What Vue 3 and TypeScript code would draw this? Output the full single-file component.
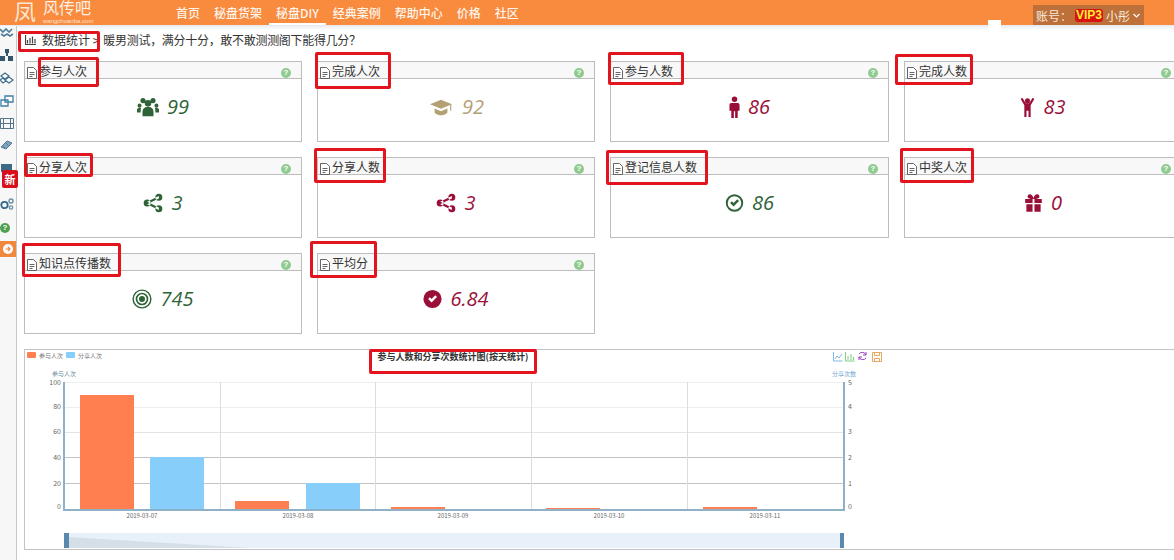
<script setup lang="ts">
const circle = (cx: number, cy: number, r: number) =>
  `M${cx - r} ${cy}a${r} ${r} 0 1 0 ${2 * r} 0a${r} ${r} 0 1 0 ${-2 * r} 0z`

const checkMark = 'M6.5 12L8.7 9.8L10.8 12L15.5 7.2L17.7 9.4L10.8 16.4z'

const icons: Record<string, { d: string; width: number; box?: string; odd?: boolean }> = {
  users: {
    width: 22,
    d:
      circle(6.5, 5, 2.8) + circle(17.5, 5, 2.8) + circle(12, 8, 3.6) + circle(2.8, 10.5, 2.2) + circle(21.2, 10.5, 2.2) +
      'M6 22v-5a5 5 0 0 1 5-5h2a5 5 0 0 1 5 5v5zM0 18v-3a2 2 0 0 1 2-2h2.5a7 7 0 0 0-.5 3v2zM24 18v-3a2 2 0 0 0-2-2h-2.5a7 7 0 0 1 .5 3v2z',
  },
  cap: {
    width: 26,
    d: 'M12 4L24 9L12 14L0 9zM5 13.500v4c0 2 4 3.500 7 3.500s7-1.500 7-3.500v-4l-7 3zM22 10v6h1.200v-6.600z',
  },
  male: {
    width: 11,
    box: '6 0 12 24',
    d: circle(12, 3.5, 3) + 'M8.500 7.500h7a2 2 0 0 1 2 2v6.500h-2v8h-2.800v-7.500h-1.400v7.500h-2.800v-8h-2v-6.500a2 2 0 0 1 2-2z',
  },
  child: {
    width: 15,
    box: '3 0 18 24',
    d: circle(12, 4.5, 3) + 'M3.800 2.500L5.800 1L10 7.500h4L18.200 1L20.200 2.500L15.800 10v5.500v8.500h-2.600v-7.500h-2.400v7.500h-2.600v-14z',
  },
  share: {
    width: 20,
    d:
      circle(5, 12, 4.2) + circle(19, 5, 4.2) + circle(19, 19, 4.2) +
      'M5 10.400L19 3.500v3L5 13.600zM5 10.400L19 17.500v3L5 13.600z',
  },
  checkO: {
    width: 19,
    odd: true,
    d: circle(12, 12, 11) + circle(12, 12, 8.6) + checkMark,
  },
  gift: {
    width: 19,
    d:
      'M1.500 7h9.300v5H1.500zM13.200 7h9.300v5h-9.300zM3 13.500h7.800V23H3zM13.200 13.500H21V23h-7.800z' +
      'M12 7C8 7 4.500 6.500 4.500 3.800a3 3 0 0 1 3-3c2.300 0 4.500 3 4.500 6.200c0-3.200 2.200-6.200 4.500-6.200a3 3 0 0 1 3 3C19.500 6.500 16 7 12 7z',
  },
  bullseye: {
    width: 20,
    odd: true,
    d: circle(12, 12, 11.5) + circle(12, 12, 9.8) + circle(12, 12, 7.6) + circle(12, 12, 5.6) + circle(12, 12, 3.6),
  },
  check: {
    width: 19,
    odd: true,
    d: circle(12, 12, 11.5) + checkMark,
  },
}

const navItems = ['首页', '秘盘货架', '秘盘DIY', '经典案例', '帮助中心', '价格', '社区']

const cards = [
  { title: '参与人次', icon: 'users', value: '99', tone: 'green' },
  { title: '完成人次', icon: 'cap', value: '92', tone: 'tan' },
  { title: '参与人数', icon: 'male', value: '86', tone: 'maroon' },
  { title: '完成人数', icon: 'child', value: '83', tone: 'maroon' },
  { title: '分享人次', icon: 'share', value: '3', tone: 'green' },
  { title: '分享人数', icon: 'share', value: '3', tone: 'maroon' },
  { title: '登记信息人数', icon: 'checkO', value: '86', tone: 'green' },
  { title: '中奖人次', icon: 'gift', value: '0', tone: 'maroon' },
  { title: '知识点传播数', icon: 'bullseye', value: '745', tone: 'green' },
  { title: '平均分', icon: 'check', value: '6.84', tone: 'maroon' },
]

// 红色标注框 [x1, y1, x2, y2]
const marks = [
  [18, 31, 100, 52],
  [38, 57, 99, 87],
  [315, 52, 391, 89],
  [608, 52, 684, 85],
  [895, 54, 973, 85],
  [24, 153, 93, 177],
  [314, 148, 386, 183],
  [606, 150, 708, 185],
  [900, 148, 974, 183],
  [22, 243, 121, 277],
  [310, 241, 377, 278],
  [369, 349, 537, 374],
]

const markStyle = (m: number[]) => ({
  left: `${m[0]}px`,
  top: `${m[1]}px`,
  width: `${m[2] - m[0]}px`,
  height: `${m[3] - m[1]}px`,
})

const plotBottom = 510
const leftTicks = [
  { label: '100', y: 382 },
  { label: '80', y: 406 },
  { label: '60', y: 431 },
  { label: '40', y: 457 },
  { label: '20', y: 483 },
  { label: '0', y: 506 },
]
const rightTicks = ['5', '4', '3', '2', '1', '0']
const gridX = [220, 375, 531, 687]
const bars = [
  { x: 80, top: 395, color: '#ff7f50' },
  { x: 150, top: 457, color: '#87cefa' },
  { x: 235, top: 501, color: '#ff7f50' },
  { x: 306, top: 483, color: '#87cefa' },
  { x: 391, top: 507, color: '#ff7f50' },
  { x: 546, top: 508, color: '#ff7f50' },
  { x: 703, top: 507, color: '#ff7f50' },
]
const dates = [
  { label: '2019-03-07', x: 142 },
  { label: '2019-03-08', x: 298 },
  { label: '2019-03-09', x: 453 },
  { label: '2019-03-10', x: 609 },
  { label: '2019-03-11', x: 765 },
]
</script>

<template>
  <div class="page">
    <header class="topbar">
      <div class="logo">
        <span class="logo-mark">凤</span>
        <div class="logo-text">
          <span class="logo-name">风传吧</span>
          <span class="logo-url">wangchuanba.com</span>
        </div>
      </div>
      <nav class="nav">
        <a v-for="item in navItems" :key="item" :class="['nav-item', { active: item === '秘盘DIY' }]">{{ item }}</a>
      </nav>
      <div class="account">
        <span>账号：</span>
        <span class="vip">VIP3</span>
        <span>小彤</span>
        <svg width="7" height="5" viewBox="0 0 7 5"><path d="M.5 1l3 3 3-3" fill="none" stroke="#fff" stroke-width="1.2" /></svg>
      </div>
    </header>
    <div class="topbar-shade"></div>

    <div class="body">
      <aside class="sidebar">
        <svg class="side-icon" width="14" height="12" viewBox="0 0 14 12"><path d="M0 3l3 3 3-3 3 3 3-3M1 8l3 2 3-2 3 2 3-2" fill="none" stroke="#4f7d99" stroke-width="1.6" /></svg>
        <svg class="side-icon" width="14" height="12" viewBox="0 0 14 12"><path d="M5 0h4v4H5zM0 7h5v5H0zM8 7h5v5H8zM6 4h2v3H6z" fill="#33566e" /></svg>
        <svg class="side-icon" width="14" height="12" viewBox="0 0 14 12"><path d="M1 4l4-3 4 3-4 3zM5 8l4-3 4 3-4 3zM0 8l3-2 3 3-3 2z" fill="#fff" stroke="#3f6f8e" stroke-width="1.2" /></svg>
        <svg class="side-icon" width="14" height="12" viewBox="0 0 14 12"><path d="M5 1h8v6H5zM1 5h7v6H1z" fill="#fff" stroke="#3f7fa8" stroke-width="1.3" /></svg>
        <svg class="side-icon" width="14" height="11" viewBox="0 0 14 11"><path d="M.5.5h13v10H.5zM3.500.5v10M10.500.5v10M.5 5.500h13" fill="none" stroke="#56748a" /></svg>
        <svg class="side-icon" width="13" height="10" viewBox="0 0 13 10"><path d="M1 7l6-6 5 2-6 6zM3 6l2 2M6 3l2 2" fill="#7fa6bd" stroke="#4f7d99" /></svg>
        <div class="side-new">
          <span class="side-new-top"></span>
          <span class="side-new-badge">新</span>
        </div>
        <svg class="side-icon gear" width="14" height="12" viewBox="0 0 14 12"><circle cx="4.500" cy="7" r="3.200" fill="none" stroke="#356a8a" stroke-width="1.800" /><circle cx="11" cy="3" r="2" fill="none" stroke="#6a90a8" stroke-width="1.400" /><circle cx="11" cy="9.500" r="1.700" fill="none" stroke="#6a90a8" stroke-width="1.300" /></svg>
        <span class="side-help">?</span>
        <div class="side-collapse">
          <svg width="10" height="10" viewBox="0 0 10 10"><circle cx="5" cy="5" r="5" fill="#fff" /><path d="M2.500 5h4M5 3l2 2-2 2" fill="none" stroke="#f0883e" stroke-width="1.200" /></svg>
        </div>
      </aside>

      <main class="content">
        <div class="crumb">
          <svg width="11" height="10" viewBox="0 0 11 10"><path d="M.5 0v9.500H11M2.500 5v3.500M5 3v5.500M7.500 1.500v7M10 4v4.500" fill="none" stroke="#444" stroke-width="1.200" /></svg>
          <span class="crumb-link">数据统计 &gt;</span>
          <span class="crumb-title">暖男测试，满分十分，敢不敢测测阁下能得几分？</span>
        </div>

        <section class="cards">
          <article v-for="card in cards" :key="card.title" class="card">
            <div class="card-head">
              <svg width="10" height="12" viewBox="0 0 10 12"><path d="M.5.5h6l3 3v8h-9zM2.500 5.500h5M2.500 7.500h5M2.500 9.500h3" fill="#fff" stroke="#555" stroke-width=".9" /></svg>
              <span class="card-title">{{ card.title }}</span>
              <span class="help">?</span>
            </div>
            <div :class="['card-body', card.tone]">
              <svg
                :width="icons[card.icon].width"
                height="22"
                :viewBox="icons[card.icon].box || '0 0 24 24'"
              >
                <path :d="icons[card.icon].d" :fill-rule="icons[card.icon].odd ? 'evenodd' : 'nonzero'" fill="currentColor" />
              </svg>
              <span class="card-value">{{ card.value }}</span>
            </div>
          </article>
        </section>

        <section class="chart-box">
          <svg class="chart" width="1149" height="199" viewBox="25 350 1149 199">
            <rect x="27" y="352" width="9" height="6" rx="1" fill="#ff7f50" />
            <text x="39" y="358" class="small">参与人次</text>
            <rect x="66" y="352" width="9" height="6" rx="1" fill="#87cefa" />
            <text x="78" y="358" class="small">分享人次</text>

            <text x="453" y="360" class="chart-title" text-anchor="middle">参与人数和分享次数统计图(按天统计)</text>

            <g fill="none" stroke-width="1">
              <path d="M833.500 352v9h9M835 359l2-3 2 2 3-4" stroke="#7db8e8" />
              <path d="M845.500 352v9h9M848 360v-4M851 360v-6M853.500 360v-3" stroke="#7ed07e" />
              <path d="M859 354a4 4 0 0 1 7 1M866 358a4 4 0 0 1-7-1M866 352v3h-3M859 360v-3h3" stroke="#9a3fc0" />
              <path d="M872.500 352.500h9v9h-9zM874.500 352.500v3h5v-3M874.500 361.500v-3h5v3" stroke="#e8a860" />
            </g>

            <text x="52" y="376" class="small axis">参与人次</text>
            <text x="832" y="376" class="small axis-r">分享次数</text>

            <path d="M64 382.500H844M64 407.500H844" stroke="#eee" />
            <path d="M64 432.500H844" stroke="#e4e4e4" />
            <path d="M64 457.500H844M64 483.500H844" stroke="#c4c4c4" />
            <path v-for="x in gridX" :key="x" :d="`M${x}.5 382V${plotBottom}`" stroke="#ddd" />

            <rect
              v-for="bar in bars"
              :key="bar.x"
              :x="bar.x"
              :y="bar.top"
              width="54"
              :height="plotBottom - bar.top"
              :fill="bar.color"
            />

            <path :d="`M64 382V${plotBottom}H844V382`" fill="none" stroke="#8fb1c8" stroke-width="2" />

            <text v-for="t in leftTicks" :key="t.label" x="61" :y="t.y + 3" class="tiny tick" text-anchor="end">{{ t.label }}</text>
            <text v-for="(t, i) in rightTicks" :key="t" x="848" :y="leftTicks[i].y + 3" class="tiny tick">{{ t }}</text>
            <text v-for="d in dates" :key="d.x" :x="d.x" y="518" class="small tick" text-anchor="middle">{{ d.label }}</text>

            <rect x="64" y="533" width="780" height="15" fill="#e8f1f9" />
            <path d="M69 537L250 548H69z" fill="#d5dfe8" />
            <rect x="64" y="533" width="5" height="15" fill="#5b88ad" />
            <rect x="840" y="533" width="4" height="15" fill="#5b88ad" />
          </svg>
        </section>
      </main>
    </div>

    <div class="top-notch"></div>
    <div v-for="m in marks" :key="m.join()" class="mark" :style="markStyle(m)"></div>
  </div>
</template>

<style scoped>
.page {
  position: relative;
  width: 1174px;
  height: 560px;
  overflow: hidden;
  background: #fff;
  font-family: "Noto Sans CJK SC", "Liberation Sans", sans-serif;
  font-size: 12px;
  color: #333;
}

.topbar {
  display: flex;
  align-items: center;
  height: 25px;
  background: #f98b3f;
  color: #fff;
}

.topbar-shade {
  height: 5px;
  background: linear-gradient(#e6e9ee, #fff);
}

.logo {
  display: flex;
  align-items: flex-start;
  gap: 7px;
  width: 169px;
  height: 25px;
  padding-left: 14px;
  box-sizing: border-box;
  flex-shrink: 0;
  font-family: "Liberation Sans", "Noto Sans CJK SC", sans-serif;
}

.logo-mark {
  font-size: 22px;
  line-height: 25px;
  color: #fbe6d4;
}

.logo-text {
  display: flex;
  flex-direction: column;
}

.logo-name {
  font-size: 16px;
  color: #fdf0e4;
  line-height: 18px;
}

.logo-url {
  font-size: 6px;
  line-height: 7px;
  color: #fde3cf;
  white-space: nowrap;
}

.nav {
  display: flex;
  height: 100%;
}

.nav-item {
  padding: 0 7px;
  line-height: 25px;
  font-weight: 500;
  white-space: nowrap;
  color: #fff4ea;
}

.nav-item.active {
  border-bottom: 2px solid #fff;
  height: 25px;
  box-sizing: border-box;
}

.account {
  display: flex;
  align-items: center;
  gap: 3px;
  margin-left: auto;
  margin-right: 30px;
  margin-top: 5px;
  padding: 0 3px;
  height: 20px;
  width: 111px;
  box-sizing: border-box;
  background: #bd7039;
  color: #f6eadf;
  white-space: nowrap;
}

.vip {
  background: #d9140f;
  color: #ffe93a;
  font-family: "Liberation Sans", sans-serif;
  font-weight: 700;
  font-size: 12px;
  line-height: 13px;
  padding: 0 1px;
  border-radius: 3px;
}

.top-notch {
  position: absolute;
  left: 988px;
  top: 20px;
  width: 13px;
  height: 10px;
  background: #fff;
}

.body {
  display: flex;
}

.sidebar {
  display: flex;
  flex-direction: column;
  align-items: flex-start;
  flex-shrink: 0;
  width: 17px;
  height: 534px;
  margin-top: -4px;
  box-sizing: border-box;
  background: #f7f7f7;
  border-right: 1px solid #c9c9c9;
}

.side-icon {
  display: block;
  margin: 0 0 11px 0;
  flex-shrink: 0;
}

.side-new {
  position: relative;
  height: 36px;
  margin-top: 3px;
  width: 16px;
}

.side-new-top {
  position: absolute;
  left: 1px;
  top: 0;
  width: 11px;
  height: 8px;
  background: #3d6a85;
}

.side-new-badge {
  position: absolute;
  left: 2px;
  top: 6px;
  width: 16px;
  height: 18px;
  line-height: 18px;
  text-align: center;
  background: #d8101c;
  color: #fff;
  font-size: 11px;
  font-weight: 700;
  border-radius: 2px;
}

.gear {
  margin-bottom: 13px;
  margin-top: -2px;
}

.side-help {
  width: 10px;
  height: 10px;
  border-radius: 50%;
  background: #4fa04f;
  color: #fff;
  font-size: 8px;
  line-height: 10px;
  text-align: center;
  font-weight: 700;
  font-family: "Liberation Sans", sans-serif;
}

.side-collapse {
  display: flex;
  align-items: center;
  justify-content: center;
  width: 16px;
  height: 16px;
  margin-top: 8px;
  background: #f0883e;
}

.content {
  flex: 1;
  min-width: 0;
  padding-left: 7px;
}

.crumb {
  display: flex;
  align-items: center;
  gap: 4px;
  height: 19px;
  padding-left: 1px;
  white-space: nowrap;
}

.crumb svg {
  margin-right: 2px;
}

.crumb-title {
  letter-spacing: -0.3px;
}

.cards {
  display: grid;
  grid-template-columns: 278px 278px 279px 278px;
  grid-auto-rows: 81px;
  column-gap: 15px;
  row-gap: 15px;
  margin-top: 12px;
}

.card {
  display: flex;
  flex-direction: column;
  border: 1px solid #bdbdbd;
  box-sizing: border-box;
}

.card-head {
  display: flex;
  align-items: center;
  gap: 2px;
  height: 16px;
  padding: 0 10px 0 2px;
  flex-shrink: 0;
  background: #f8f8f8;
  border-bottom: 1px solid #bdbdbd;
  color: #333;
}

.card-head svg {
  margin-top: 5px;
  flex-shrink: 0;
}

.card-title {
  white-space: nowrap;
  line-height: 16px;
  margin-top: 1px;
}

.help {
  width: 10px;
  height: 10px;
  margin-left: auto;
  margin-top: 5px;
  border-radius: 50%;
  background: #8fcb8f;
  color: #fff;
  font-family: "Liberation Sans", sans-serif;
  font-size: 8px;
  font-weight: 700;
  line-height: 10px;
  text-align: center;
}

.card-body {
  flex: 1;
  display: flex;
  align-items: center;
  justify-content: center;
  gap: 8px;
  padding-bottom: 6px;
}

.card-value {
  font-family: "Open Sans", "Liberation Sans", sans-serif;
  font-style: italic;
  font-size: 20px;
  line-height: 1;
}

.green {
  color: #2f6337;
}

.tan {
  color: #b3a173;
}

.maroon {
  color: #9a0f38;
}

.chart-box {
  margin-top: 15px;
  height: 201px;
  box-sizing: border-box;
  border: 1px solid #c4c4c4;
  border-right: none;
}

.chart {
  display: block;
}

.tiny {
  font-size: 7px;
  fill: #777;
}

.small {
  font-size: 6px;
  fill: #777;
}

.tick {
  fill: #666;
}

.axis {
  fill: #6d8ca0;
}

.axis-r {
  fill: #6ea6d0;
}

.chart-title {
  font-size: 9px;
  font-weight: 700;
  fill: #333;
}

.mark {
  position: absolute;
  box-sizing: border-box;
  border: 3px solid #e2141d;
  border-radius: 2px;
  pointer-events: none;
}
</style>
